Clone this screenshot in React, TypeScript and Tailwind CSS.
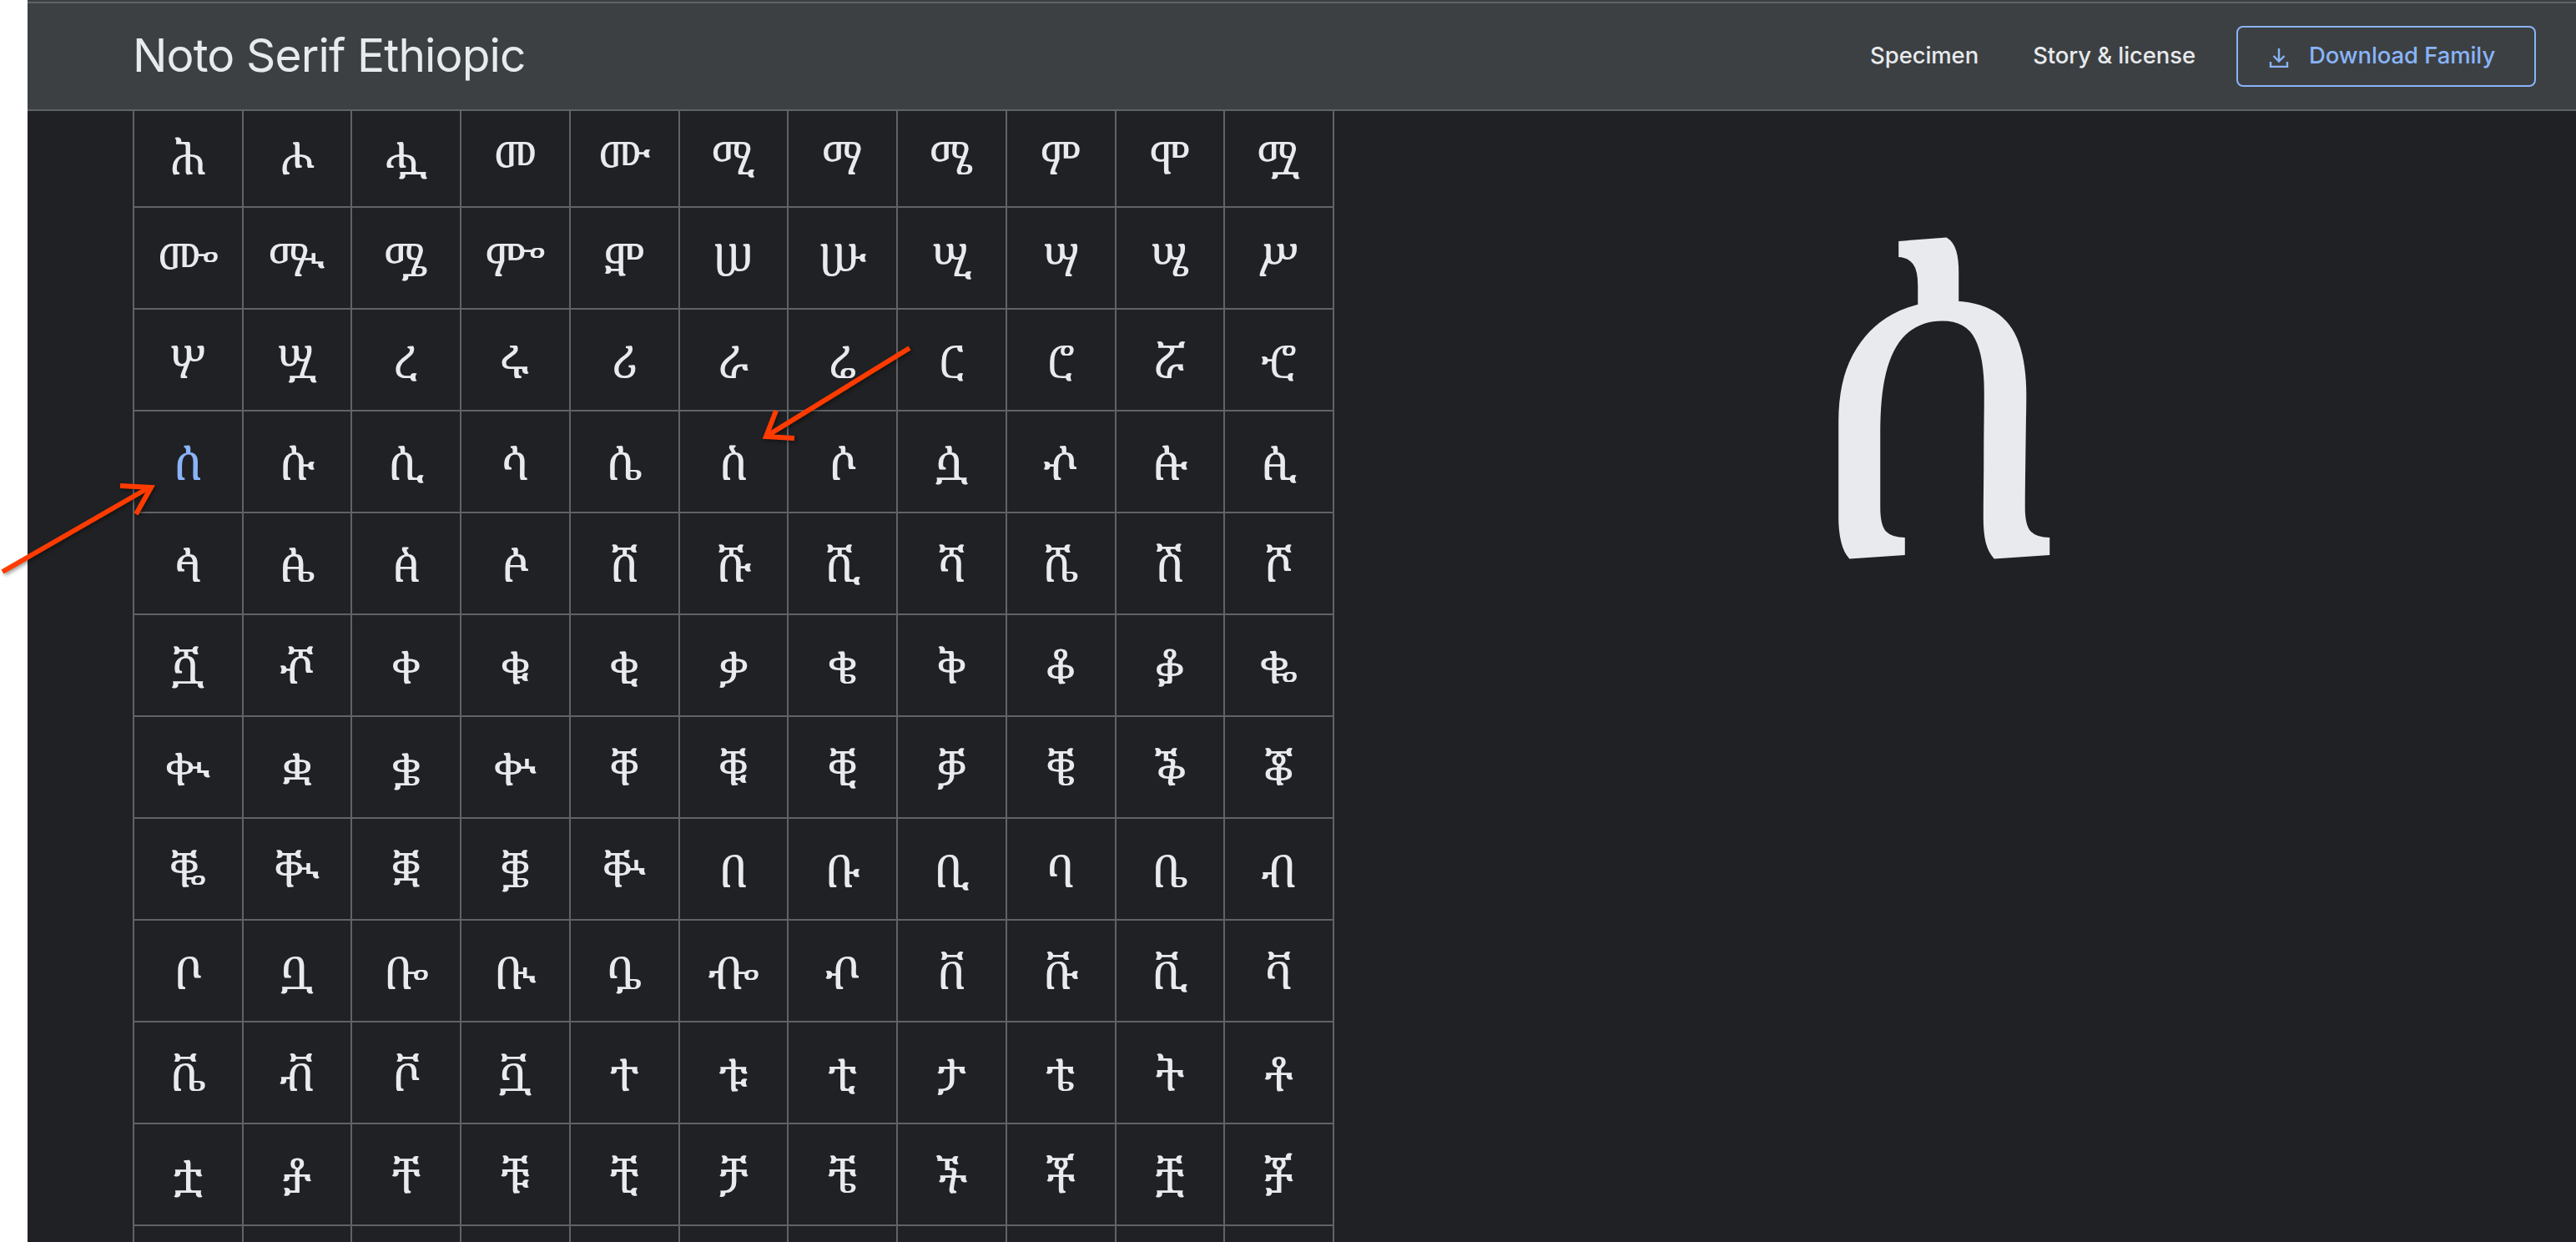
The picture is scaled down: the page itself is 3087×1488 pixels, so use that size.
const rows = [
  "ሕሖሗመሙሚማሜምሞሟ",
  "ᎀᎁᎂᎃⶁሠሡሢሣሤሥ",
  "ሦሧረሩሪራሬርሮሯⶂ",
  "ሰሱሲሳሴስሶሷⶃꬁꬂ",
  "ꬃꬄꬅꬆሸሹሺሻሼሽሾ",
  "ሿⶄቀቁቂቃቄቅቆቇቈ",
  "ቊቋቌቍቐቑቒቓቔቕቖ",
  "ቘቚቛቜቝበቡቢባቤብ",
  "ቦቧᎄᎅᎆᎇⶅቨቩቪቫ",
  "ቬቭቮቯተቱቲታቴትቶ",
  "ቷⶆቸቹቺቻቼችቾቿⶇ",
];

const glyphFont = "[font-family:'Noto_Serif_Ethiopic','Noto_Sans','DejaVu_Serif',serif]";

function Arrow({ d }: { d: string }) {
  return <path d={d} fill="none" stroke="#ff3b00" strokeWidth="6" strokeLinejoin="miter" />;
}

export default function App() {
  return (
    <div className="relative flex h-[1488px] w-[3087px] overflow-hidden bg-white">
      <div className="w-[33px] shrink-0" />
      <div className="flex min-w-0 flex-1 flex-col bg-[#202124]">
        <div className="h-[2px] shrink-0 bg-[#3c4043]" />
        {/* top bar */}
        <header className="relative z-10 flex h-[131px] shrink-0 items-center justify-between border-t-2 border-b-2 border-[#5f6368] bg-[#3c4043] pl-[126px] pr-[48px] font-['Inter',sans-serif]">
          <h1 className="pb-[2px] text-[55px] font-normal leading-none tracking-[-0.85px] text-[#e8eaed]">
            Noto Serif Ethiopic
          </h1>
          <nav className="flex items-center text-[27.5px] font-medium tracking-[-0.1px]">
            <a className="mr-[65px] pb-[2px] text-[#e8eaed]">Specimen</a>
            <a className="mr-[49px] pb-[2px] text-[#e8eaed]">Story &amp; license</a>
            <a className="flex h-[73px] w-[359px] items-center rounded-lg border-2 border-[#8ab4f8] pb-[2px] pl-[37px] text-[#8ab4f8]">
              <svg
                width="24"
                height="24"
                viewBox="0 0 24 24"
                fill="none"
                stroke="currentColor"
                strokeWidth="2.4"
                className="mr-[24px] mt-[5px]"
              >
                <path d="M12 1v15M5.5 10l6.5 6.5 6.5-6.5M2 17v6h20v-6" />
              </svg>
              Download Family
            </a>
          </nav>
        </header>

        <div className="flex min-h-0 flex-1">
          <div className="ml-[126px] -mt-[6px] grid w-[1440px] shrink-0 auto-rows-[122px] grid-cols-11 content-start border-l-2 border-[#5f6368]">
            {rows.flatMap((row, r) =>
              Array.from(row).map((ch, c) => (
                <div
                  key={`${r}-${c}`}
                  className={`flex items-center justify-center border-r-2 border-b-2 border-[#5f6368] pt-[1px] text-[54px] leading-none ${glyphFont} ${
                    r === 3 && c === 0 ? "text-[#8ab4f8]" : "text-[#e8eaed]"
                  }`}
                >
                  {ch}
                </div>
              ))
            )}
            {/* next row, its glyphs are below the fold */}
            {Array.from({ length: 11 }, (_, c) => (
              <div key={c} className="border-r-2 border-[#5f6368]" />
            ))}
          </div>
          {/* glyph preview */}
          <div className="flex flex-1 justify-center pr-[47px] pt-[40px]">
            <span className={`text-[500px] leading-[1.2] text-[#e8eaed] ${glyphFont}`}>ሰ</span>
          </div>
        </div>
      </div>

      {/* red annotation arrows */}
      <svg
        className="absolute left-0 top-0 drop-shadow-[2px_2px_2px_rgba(0,0,0,0.4)]"
        width="3087"
        height="1488"
        fill="none"
      >
        <Arrow d="M3 685 L177 585" />
        <Arrow d="M144 582 L181 584 L163 616" />
        <Arrow d="M1090 417 L921 521" />
        <Arrow d="M930 492 L918 523 L952 525" />
      </svg>
    </div>
  );
}
